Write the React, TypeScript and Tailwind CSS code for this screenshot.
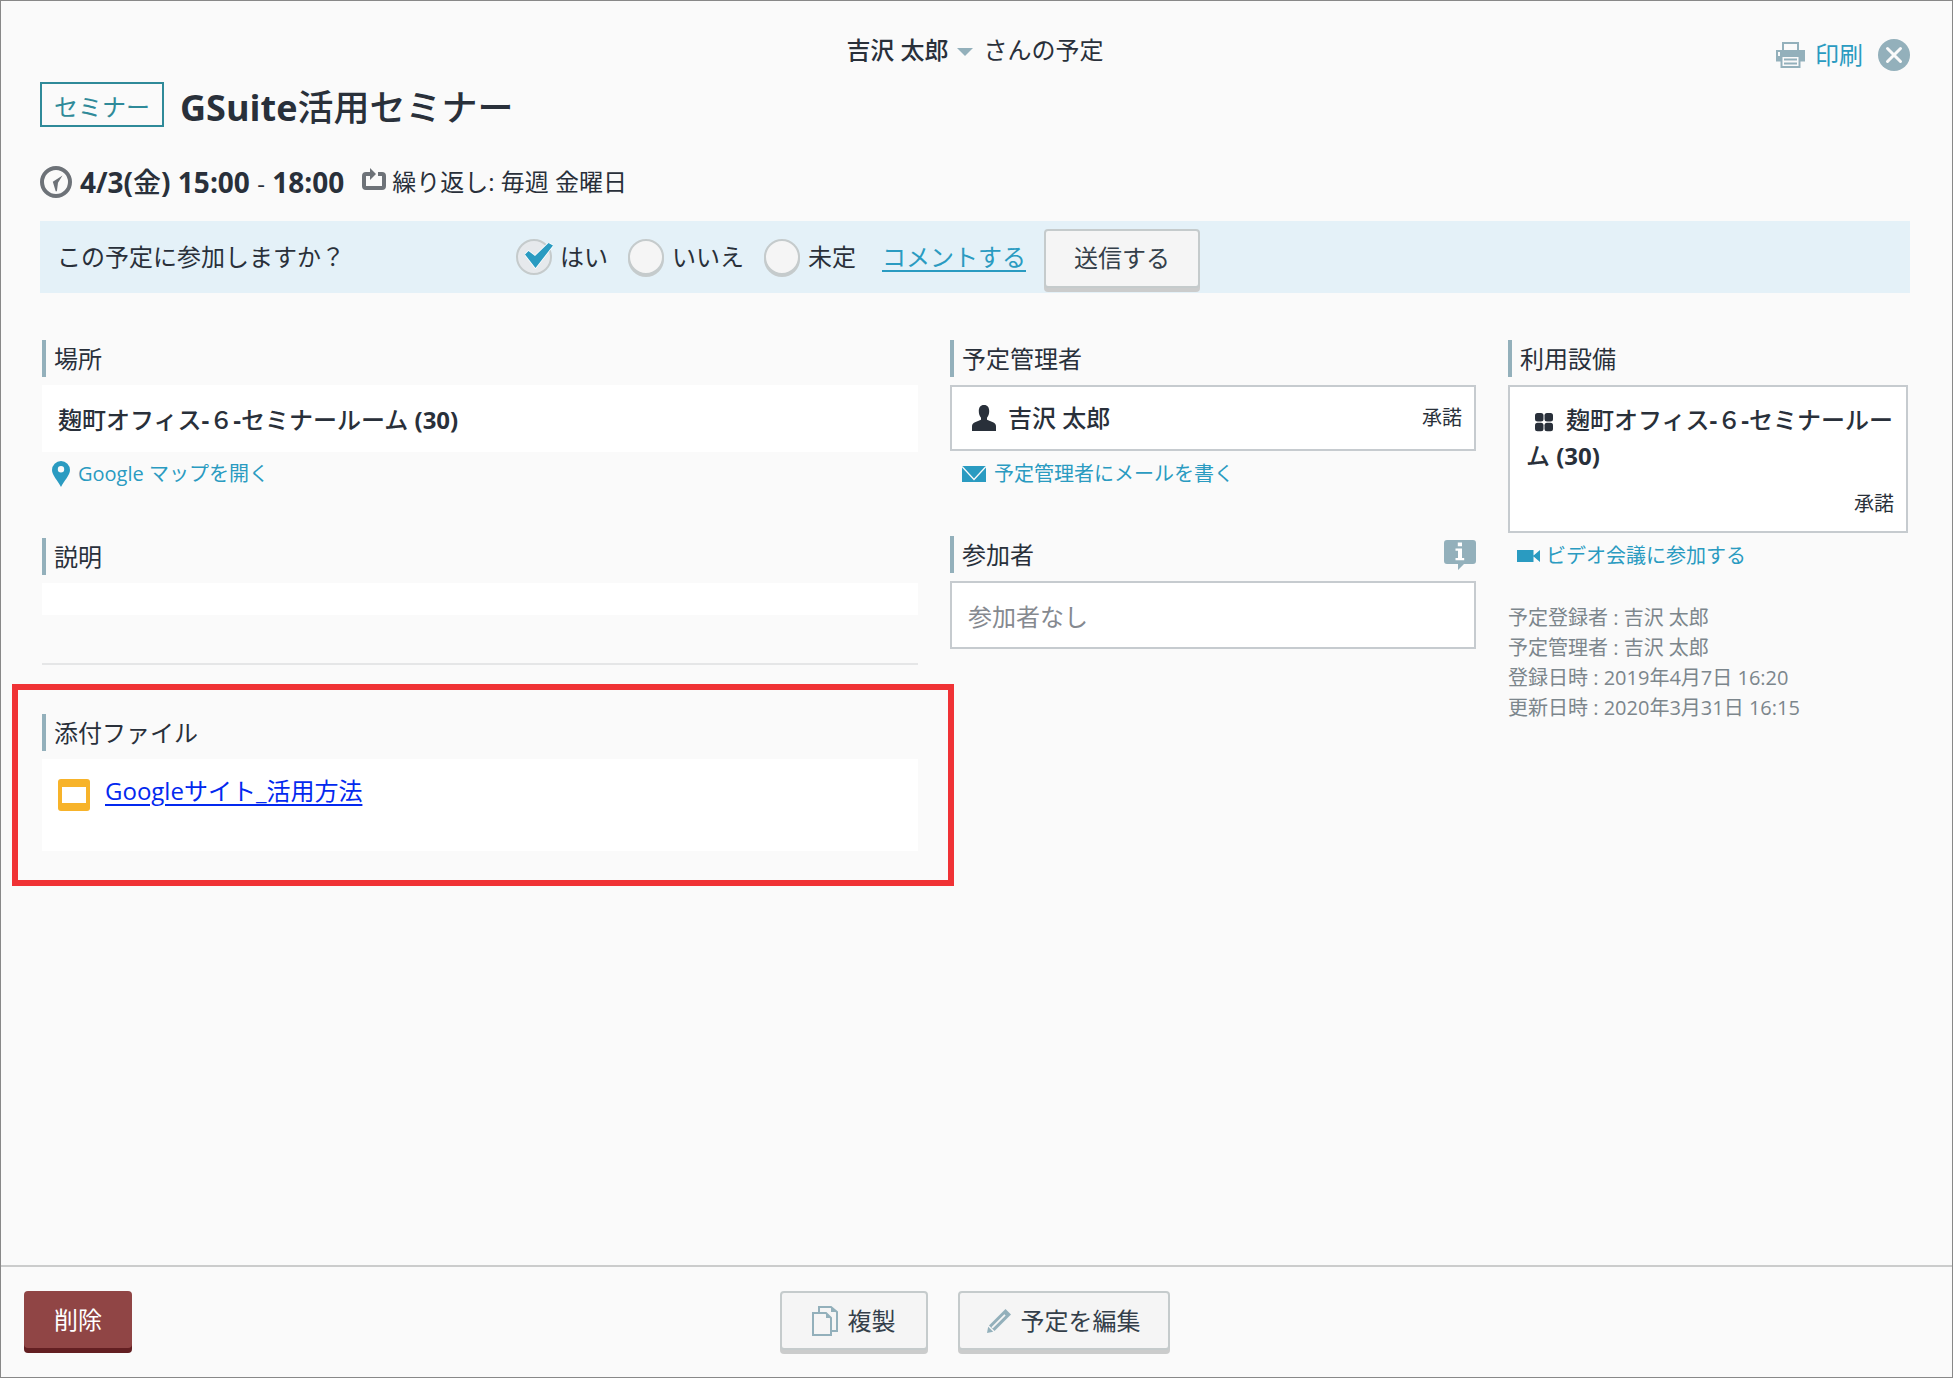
import type { ReactNode } from "react";

const CLOCK = (
  <svg viewBox="0 0 32 32" className="size-8 shrink-0" aria-hidden="true">
    <circle cx="16" cy="16" r="14" fill="none" stroke="#6d7278" strokeWidth="4" />
    <path d="M22.500 9.500 12.800 15.800l2.900 9.400h1.200L18 16.800z" fill="#6d7278" />
  </svg>
);

const REPEAT = (
  <svg viewBox="0 0 24 23" className="mb-1.5 h-[23px] w-6 shrink-0" aria-hidden="true">
    <path d="M8 6H4Q2 6 2 8V18q0 2 2 2h16q2 0 2-2V8q0-2-2-2h-4" fill="none" stroke="#6d7278" strokeWidth="4" />
    <path d="M8 0l6 6-6 6z" fill="#6d7278" />
  </svg>
);

const PRINTER = (
  <svg viewBox="0 0 29 26" className="h-[26px] w-[29px]" aria-hidden="true">
    <path d="M7 8V1h15v7" fill="none" stroke="#93b0bb" strokeWidth="2" />
    <path d="M0 8h29v11.500h-5V14H5v5.500H0z" fill="#93b0bb" />
    <path d="M2 10h2v4H2z" fill="#fafafa" />
    <path d="M5.500 14h18v11h-18zM8 17.500h13M8 21.500h13" fill="none" stroke="#93b0bb" strokeWidth="2" />
  </svg>
);

const CLOSE = (
  <svg viewBox="0 0 32 32" className="size-8" aria-hidden="true">
    <circle cx="16" cy="16" r="16" fill="#93b0bb" />
    <path d="m9.500 9.500 13 13m0-13-13 13" stroke="#fafafa" strokeWidth="3" strokeLinecap="round" />
  </svg>
);

const PIN = (
  <svg viewBox="0 0 18 26" className="h-[26px] w-[18px] shrink-0" aria-hidden="true">
    <path
      fillRule="evenodd"
      d="M9 0a9 9 0 0 1 9 9c0 5-6 11-9 17C6 20 0 14 0 9a9 9 0 0 1 9-9zm0 5a3.200 3.200 0 1 0 0 6.400A3.200 3.200 0 0 0 9 5z"
      fill="#2a9bc1"
    />
  </svg>
);

const MAIL = (
  <svg viewBox="0 0 24 16" className="h-4 w-6 shrink-0" aria-hidden="true">
    <path d="M0 0h24v16H0z" fill="#2a9bc1" />
    <path d="m0 .5 12 13 12-13" fill="none" stroke="#fafafa" strokeWidth="1.300" />
  </svg>
);

const VIDEO = (
  <svg viewBox="0 0 23 12" className="h-3 w-[23px] shrink-0" aria-hidden="true">
    <path d="M0 0h16.500v12H0zM16 6l7-6v12z" fill="#2a9bc1" />
  </svg>
);

const PERSON = (
  <svg viewBox="0 0 24 26" className="h-[26px] w-6 shrink-0" aria-hidden="true">
    <path
      d="M12 0c3.700 0 5.200 2.600 5.200 6 0 2.600-.7 5-2.200 6.800v2l6 2.400c2.100.9 3 2.200 3 4.200V26H0v-4.600c0-2 .9-3.300 3-4.200l6-2.400v-2C7.500 11 6.800 8.600 6.800 6c0-3.400 1.500-6 5.200-6z"
      fill="#29303a"
    />
  </svg>
);

const FACILITY = (
  <svg viewBox="0 0 20 20" className="mr-3 ml-2 inline-block size-5 align-[-3px]" aria-hidden="true">
    <g fill="#29303a">
      <rect x="1" y="1" width="8.500" height="8.500" rx="2.500" />
      <rect x="10.500" y="1" width="8.500" height="8.500" rx="2.500" />
      <rect x="1" y="10.800" width="8.500" height="8.500" rx="2.500" />
      <rect x="10.500" y="10.800" width="8.500" height="8.500" rx="2.500" />
    </g>
  </svg>
);

const INFO = (
  <svg viewBox="0 0 32 30" className="h-[30px] w-8" aria-hidden="true">
    <path d="M3 0h26q3 0 3 3v18q0 3-3 3h-9l-6 6v-6H3q-3 0-3-3V3q0-3 3-3z" fill="#93b0bb" />
    <path d="M13.800 2.500h4.200v3.800h-4.200zM11.500 8.500H18V18h2.200v2.300h-8.700V18h2.500v-7.200h-2.500z" fill="#fff" />
  </svg>
);

const SLIDES = (
  <svg viewBox="0 0 32 32" className="size-8 shrink-0" aria-hidden="true">
    <rect width="32" height="32" rx="3" fill="#f7b32a" />
    <path d="M4 8h24v16H4z" fill="#fff" />
  </svg>
);

const COPY = (
  <svg viewBox="0 0 26 30" className="h-[30px] w-[26px]" aria-hidden="true">
    <path d="M7 6V1h12l6 5v19h-5M1 7h13l5 5v17H1z" fill="none" stroke="#93b0bb" strokeWidth="2" />
    <path d="M14 7v5h5zM19 1v5h6z" fill="#93b0bb" />
  </svg>
);

const PENCIL = (
  <svg viewBox="0 0 24 24" className="size-6" aria-hidden="true">
    <path d="M18.500 0 24 5.500 7.500 22 2 16.500z" fill="#93b0bb" />
    <path d="M1.200 17.800 6.200 22.800 0 24z" fill="#93b0bb" />
    <path d="M5 18.800 18 5.800" stroke="#f5f5f5" strokeWidth="1.800" />
  </svg>
);

function Heading({ children, extra }: { children: ReactNode; extra?: ReactNode }) {
  return (
    <div className="mb-2 flex h-[37px] items-center justify-between">
      <h2 className="border-l-4 border-[#93b0bb] pl-2 text-2xl leading-[37px]">{children}</h2>
      {extra}
    </div>
  );
}

function IconLink({ icon, tight, children }: { icon: ReactNode; tight?: boolean; children: ReactNode }) {
  return (
    <a
      href="#"
      className={`inline-flex items-center text-xl leading-[30px] text-[#2a9bc1] ${tight ? "gap-1.5" : "gap-2"}`}
    >
      {icon}
      {children}
    </a>
  );
}

function Choice({ id, label, checked }: { id: string; label: string; checked?: boolean }) {
  return (
    <div className="flex items-center gap-2">
      <span className="relative flex">
        <input
          type="radio"
          id={id}
          name="attendance"
          defaultChecked={checked}
          className="peer size-9 appearance-none rounded-full border-2 border-[#c5cbcc] bg-[#f5f5f5] shadow-[0_2px_0_#c5cbcc] checked:bg-[#e6e9ec] checked:shadow-none"
        />
        <svg
          viewBox="0 0 28 26"
          className="pointer-events-none absolute top-1 left-[9px] hidden h-[26px] w-7 peer-checked:block"
          aria-hidden="true"
        >
          <path
            d="M0 11.500 3.500 8 10 13 23.500 0 28 2.500 10.500 25z"
            fill="#2a9bc1"
            stroke="#fff"
            strokeWidth="1.500"
            paintOrder="stroke"
          />
        </svg>
      </span>
      <label htmlFor={id}>{label}</label>
    </div>
  );
}

function PushButton({ children, className }: { children: ReactNode; className: string }) {
  return (
    <button
      type="button"
      className={`flex h-[59px] items-center justify-center rounded border-2 border-[#c5cbcc] bg-[#f5f5f5] text-2xl text-[#343f4a] shadow-[0_4px_0_#cbcccc] ${className}`}
    >
      {children}
    </button>
  );
}

const ROOM_NAME = (
  <>
    麹町オフィス<b>-</b>６<b>-</b>
    {"セミナールー"}
    {"ム "}
    <b>(30)</b>
  </>
);

export default function App() {
  return (
    <div className="flex min-h-screen flex-col border border-[#888] bg-[#fafafa] font-['Open_Sans','Noto_Sans_CJK_JP',sans-serif] text-2xl text-[#29303a]">
      <header className="grid grid-cols-[1fr_auto_1fr] items-start pt-7 pr-[42px] pl-[39px]">
        <div className="col-start-2 flex items-center gap-[11px] leading-[42px]">
          <button type="button" className="flex items-center gap-2 font-medium">
            吉沢 太郎
            <svg viewBox="0 0 16 8" className="mt-1 h-2 w-4" aria-hidden="true">
              <path d="M0 0h16L8 8z" fill="#93b0bb" />
            </svg>
          </button>
          <span>さんの予定</span>
        </div>
        <div className="flex items-center justify-end gap-[15px] pt-[5px]">
          <a href="#" className="flex items-center gap-[10px] leading-[42px] text-[#2a9bc1]">
            {PRINTER}
            印刷
          </a>
          <button type="button" aria-label="閉じる">
            {CLOSE}
          </button>
        </div>
      </header>

      <main className="flex-1 pr-[42px] pl-[39px]">
        <div className="mt-1.5 flex items-center gap-4">
          <span className="border-2 border-[#2f8a99] px-3 pt-1 leading-[37px] text-[#2f8a99]">セミナー</span>
          <h1 className="pt-1.5 text-4xl leading-[39px] font-medium">
            <b>GSuite</b>活用セミナー
          </h1>
        </div>

        <div className="mt-[35px] flex items-center gap-[18px]">
          <div className="flex items-center gap-2 text-[28px] leading-[40px] font-medium">
            {CLOCK}
            <span>
              <b>4/3(</b>金<b>) 15:00</b> <span className="text-2xl font-normal">-</span> <b>18:00</b>
            </span>
          </div>
          <div className="flex items-center gap-1.5">
            {REPEAT}
            <span>繰り返し: 毎週 金曜日</span>
          </div>
        </div>

        <form className="mt-[19px] flex h-[72px] items-center bg-[#e4f1f8] pl-[17px]" onSubmit={(e) => e.preventDefault()}>
          <fieldset className="flex items-center">
            <legend className="float-left w-[459px]">この予定に参加しますか？</legend>
            <div className="flex gap-5">
              <Choice id="yes" label="はい" checked />
              <Choice id="no" label="いいえ" />
              <Choice id="undecided" label="未定" />
            </div>
          </fieldset>
          <a href="#" className="ml-[26px] text-[#2a9bc1] underline underline-offset-4">
            コメントする
          </a>
          <PushButton className="mt-0.5 ml-[18px] w-[156px]">送信する</PushButton>
        </form>

        <div className="mt-[47px] grid grid-cols-[876fr_526fr_400fr] gap-8 px-0.5">
          <div>
            <section>
              <Heading>場所</Heading>
              <p className="bg-white px-4 pt-4 pb-[14px] leading-[37px] font-medium">{ROOM_NAME}</p>
              <div className="mt-[7px] h-[79px] pl-2.5">
                <IconLink icon={PIN}>Google マップを開く</IconLink>
              </div>
            </section>
            <section>
              <Heading>説明</Heading>
              <div className="h-8 bg-white" />
            </section>
            <hr className="mt-12 mb-[49px] border-t-2 border-[#e5e6e7]" />
            <section className="relative">
              <Heading>添付ファイル</Heading>
              <div className="flex h-[92px] items-start gap-[15px] bg-white px-4 pt-4">
                <span className="pt-1">{SLIDES}</span>
                <a href="#" className="text-[#0329ef] underline underline-offset-4">
                  Googleサイト_活用方法
                </a>
              </div>
              <div className="pointer-events-none absolute -top-[30px] -right-[36px] -bottom-[35px] -left-[30px] border-6 border-[#f03235]" />
            </section>
          </div>

          <div>
            <section>
              <Heading>予定管理者</Heading>
              <div className="flex h-[66px] items-center border-2 border-[#c6cbcf] bg-white pr-3 pl-5">
                {PERSON}
                <span className="ml-3 flex-1 font-medium">吉沢 太郎</span>
                <span className="text-xl">承諾</span>
              </div>
              <div className="mt-1.5 h-[79px] pl-3">
                <IconLink icon={MAIL}>予定管理者にメールを書く</IconLink>
              </div>
            </section>
            <section>
              <Heading
                extra={
                  <button type="button" aria-label="参加者の情報">
                    {INFO}
                  </button>
                }
              >
                参加者
              </Heading>
              <p className="border-2 border-[#c6cbcf] bg-white px-4 pt-1 leading-[60px] text-[#85898f]">参加者なし</p>
            </section>
          </div>

          <div>
            <section>
              <Heading>利用設備</Heading>
              <div className="border-2 border-[#c6cbcf] bg-white pt-[15px] pb-[11px] pl-3">
                <p className="pr-2 pl-1 leading-9 font-medium break-all">
                  {FACILITY}
                  {ROOM_NAME}
                </p>
                <p className="mt-3.5 pr-3 text-right text-xl leading-8">承諾</p>
              </div>
              <div className="mt-1 pl-[9px]">
                <IconLink icon={VIDEO} tight>
                  ビデオ会議に参加する
                </IconLink>
              </div>
            </section>
            <div className="mt-8 text-xl leading-[30px] text-[#7c868c]">
              <p>予定登録者 : 吉沢 太郎</p>
              <p>予定管理者 : 吉沢 太郎</p>
              <p>登録日時 : 2019年4月7日 16:20</p>
              <p>更新日時 : 2020年3月31日 16:15</p>
            </div>
          </div>
        </div>
      </main>

      <footer className="grid h-[112px] grid-cols-[1fr_auto_1fr] items-start border-t-2 border-[#cbcccc] pt-6 pr-[27px] pl-[23px]">
        <button type="button" className="h-[57px] w-[108px] rounded bg-[#904545] text-white shadow-[0_5px_0_#631f22]">
          削除
        </button>
        <div className="flex gap-[30px]">
          <PushButton className="w-[148px] gap-2.5">
            {COPY}
            複製
          </PushButton>
          <PushButton className="w-[212px] gap-2.5">
            {PENCIL}
            予定を編集
          </PushButton>
        </div>
      </footer>
    </div>
  );
}
